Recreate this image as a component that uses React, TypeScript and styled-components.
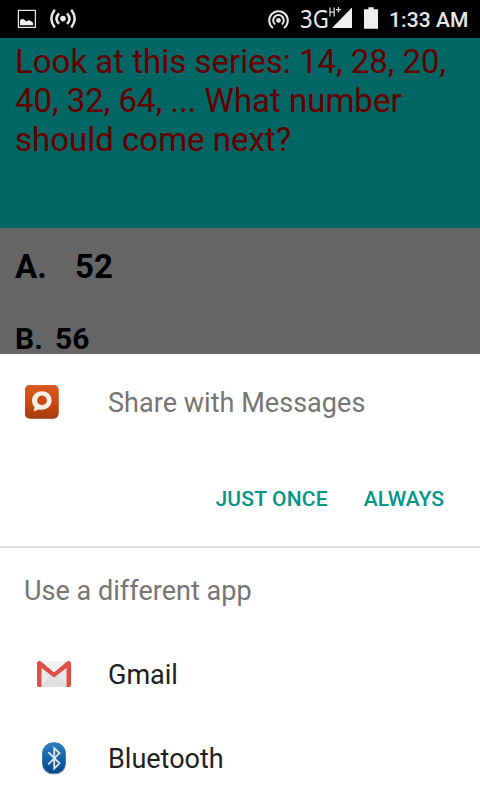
import React from "react";
import styled, { createGlobalStyle } from "styled-components";

const Global = createGlobalStyle`
  * { box-sizing: border-box; }
  body { margin: 0; background: #666; font-family: Roboto, sans-serif; }
`;

const Screen = styled.div`
  width: 480px;
  height: 800px;
  overflow: hidden;
  display: flex;
  flex-direction: column;
  background: #666;
`;

const StatusBar = styled.header`
  height: 38px;
  flex: none;
  display: flex;
  align-items: flex-start;
  justify-content: space-between;
  background: #000;
  color: #e8e8e8;
`;

const StatusGroup = styled.div`
  display: flex;
`;

const StatusIcon = styled.svg`
  display: block;
  flex: none;
`;

const Clock = styled.time`
  width: 92px;
  padding-left: 1px;
  font-size: 21px;
  font-weight: 500;
  line-height: 40px;
  letter-spacing: 0.1px;
  white-space: pre;
`;

const Network = styled.span`
  width: 29px;
  font-family: "Noto Sans", sans-serif;
  font-size: 26px;
  line-height: 37px;
  transform: scaleX(0.85);
  transform-origin: 0 0;
`;

const Question = styled.h1`
  height: 190px;
  flex: none;
  margin: 0;
  padding: 4px 15px;
  background: #006765;
  color: #660000;
  font-size: 33px;
  font-weight: 400;
  line-height: 39px;
  white-space: pre;
`;

const Answers = styled.main`
  height: 126px;
  flex: none;
  padding: 19px 15px 0;
  color: #000;
`;

const Answer = styled.div<{ $size: number; $gap: number; $letter: number }>`
  display: flex;
  gap: ${(p) => p.$gap}px;
  height: 72px;
  font-size: ${(p) => p.$size}px;
  font-weight: 700;
  line-height: 40px;

  span:first-child { width: ${(p) => p.$letter}px; }

  & + & { height: 35px; }
`;

const Sheet = styled.section`
  flex: 1;
  background: #fff;
`;

const Preferred = styled.div`
  height: 194px;
  border-bottom: 2px solid #dedede;
`;

const AppRow = styled.div<{ $height: number; $icon: number; $color: string }>`
  height: ${(p) => p.$height}px;
  display: flex;
  align-items: center;
  padding-left: ${(p) => p.$icon}px;
  color: ${(p) => p.$color};

  svg { flex: none; width: 36px; height: 36px; margin-right: ${(p) => 72 - p.$icon}px; }
`;

const Label = styled.span<{ $spacing?: number; $drop?: number }>`
  padding-top: ${(p) => p.$drop ?? 0}px;
  font-size: 27px;
  line-height: 32px;
  letter-spacing: ${(p) => p.$spacing ?? 0}px;
  white-space: pre;
`;

const Actions = styled.div`
  display: flex;
  justify-content: flex-end;
  gap: 36px;
  padding: 34px 36px 0 0;
`;

const Action = styled.button<{ $spacing?: number }>`
  padding: 0;
  border: 0;
  background: none;
  color: #009688;
  font: 500 21px/28px Roboto, sans-serif;
  letter-spacing: ${(p) => p.$spacing ?? 0}px;
  white-space: pre;
`;

const Heading = styled.h2`
  height: 84px;
  margin: 0;
  padding: 27px 24px 0;
  color: #757575;
  font-size: 27px;
  font-weight: 400;
  line-height: 32px;
  letter-spacing: 0.03px;
`;

const LeftIcons = () => (
  <StatusIcon width="90" height="38" viewBox="0 0 90 38" fill="none" stroke="#e8e8e8">
    <rect x="18.4" y="10.4" width="17" height="17" strokeWidth="1.2" />
    <path d="M20 25.2v-5l2.2-1.4 2 .6 2 2 2.4-1.2 1.8.6 2.7 2v2.4z" fill="#f0f0f0" stroke="none" />
    <circle cx="63" cy="18.6" r="2.8" fill="#e8e8e8" stroke="none" />
    <path d="M59 13.3q-5 5.3 0 10.6M67 13.3q5 5.3 0 10.6M54.7 9.8q-6.6 8.8 0 17.6M71.3 9.8q6.6 8.8 0 17.6" strokeWidth="2.5" />
  </StatusIcon>
);

const HotspotIcon = () => (
  <StatusIcon width="33" height="38" viewBox="0 0 33 38" fill="none" stroke="#e8e8e8">
    <circle cx="11.5" cy="20.4" r="2.4" fill="#e8e8e8" stroke="none" />
    <path d="M8.2 24.5a5.3 5.3 0 1 1 6.6 0M6 28a9.3 9.3 0 1 1 11 0" strokeWidth="2" />
  </StatusIcon>
);

const SignalIcon = () => (
  <StatusIcon width="31" height="38" viewBox="0 0 31 38">
    <path d="M3 28L23 7.5V28z" fill="#efefef" />
    <path d="M1 7.5v9M5.2 7.5v9M1 12h4.2M7 9.7h5M9.5 7v5.4" stroke="#e0e0e0" strokeWidth="1.25" />
  </StatusIcon>
);

const BatteryIcon = () => (
  <StatusIcon width="28" height="38" viewBox="0 0 28 38">
    <path d="M6.2 9.3h2.2V7.2h5.3v2.1H18v19.4H4V9.3z" fill="#efefef" />
  </StatusIcon>
);

const MessagesIcon = () => (
  <svg viewBox="0 0 36 36">
    <defs>
      <linearGradient id="message" x1="0" y1="0" x2="0" y2="1">
        <stop stopColor="#d75c1d" />
        <stop offset=".5" stopColor="#cd4b13" />
        <stop offset="1" stopColor="#a93b0e" />
      </linearGradient>
    </defs>
    <rect x="1" y="0" width="33.5" height="33.7" rx="5" fill="#953a14" />
    <rect x="1" y="0" width="33.5" height="32.8" rx="5" fill="url(#message)" />
    <path d="M18 6.2c-5.9 0-10 4-10 9.2 0 3.3 1.4 5.4 2.7 6.8l-1.1 4.4 5-2.1c7 1.4 13-2.7 13-9 0-5.3-3.8-9.3-9.6-9.3z" fill="#f7eee8" />
    <circle cx="18" cy="15.4" r="4.9" fill="#c84a17" />
  </svg>
);

const GmailIcon = () => (
  <svg viewBox="0 0 36 36">
    <path d="M4 5h28v26H4z" fill="#e8e9ea" />
    <path d="M5 31l13-13 13 13z" fill="#dedfe1" />
    <path d="M4 5h28L18 18z" fill="#f2f3f3" />
    <path d="M5 30.5L16 19M31 30.5L20 19" stroke="#cfd0d2" strokeWidth=".7" />
    <path d="M1 7.4C1 5 3.5 4.3 5 5.6L18 16.5 31 5.6c1.5-1.3 4-.6 4 1.8V29q0 2-2 2h-2.5V12.1L18 21.5 5.5 12.1V31H3q-2 0-2-2z" fill="#de4d46" />
  </svg>
);

const BluetoothIcon = () => (
  <svg viewBox="0 0 36 36">
    <defs>
      <linearGradient id="blue" x1="0" y1="0" x2="0" y2="1">
        <stop stopColor="#357cb9" />
        <stop offset=".48" stopColor="#1165ae" />
        <stop offset="1" stopColor="#034483" />
      </linearGradient>
    </defs>
    <rect x="6" y="3.3" width="24" height="31" rx="10.5" fill="#8a9baa" />
    <rect x="6.4" y="2.3" width="23.2" height="31" rx="10.5" fill="url(#blue)" />
    <path d="M12.3 12.1l11.2 11.2-5.3 5.2V8l5.3 5.1-11.2 11.2" fill="none" stroke="#e3e6e8" strokeWidth="1.8" />
  </svg>
);

export default function App() {
  return (
    <Screen>
      <Global />
      <StatusBar>
        <LeftIcons />
        <StatusGroup>
          <HotspotIcon />
          <Network>3G</Network>
          <SignalIcon />
          <BatteryIcon />
          <Clock>1:33 AM</Clock>
        </StatusGroup>
      </StatusBar>
      <Question>{"Look at this series: 14, 28, 20,\n40, 32, 64, ... What number\nshould come next?"}</Question>
      <Answers>
        <Answer $size={33} $letter={32} $gap={28}><span>A.</span><span>52</span></Answer>
        <Answer $size={30} $letter={28} $gap={12}><span>B.</span><span>56</span></Answer>
      </Answers>
      <Sheet>
        <Preferred>
          <AppRow $height={97} $icon={24} $color="#757575">
            <MessagesIcon />
            <Label $spacing={0.04}>Share with Messages</Label>
          </AppRow>
          <Actions><Action $spacing={0.2}>JUST ONCE</Action><Action>ALWAYS</Action></Actions>
        </Preferred>
        <Heading>Use a different app</Heading>
        <AppRow $height={84} $icon={36} $color="#212121">
          <GmailIcon /><Label $drop={2}>Gmail</Label>
        </AppRow>
        <AppRow $height={84} $icon={36} $color="#212121">
          <BluetoothIcon /><Label $drop={2}>Bluetooth</Label>
        </AppRow>
      </Sheet>
    </Screen>
  );
}
